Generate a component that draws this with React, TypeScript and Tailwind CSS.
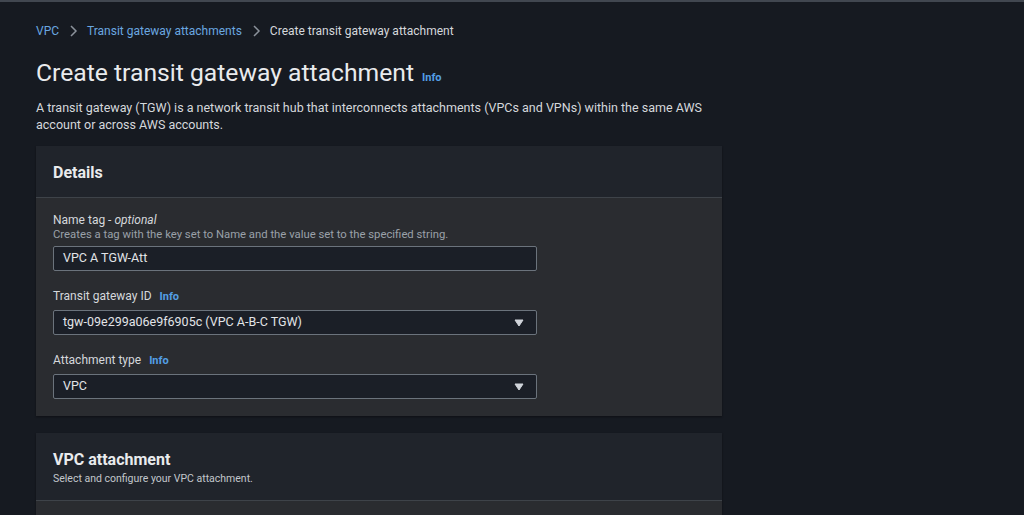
import React from "react";

function Caret() {
  return (
    <svg width="10" height="8" viewBox="0 0 10 8" className="shrink-0">
      <path d="M1 1 H9 L5 7 Z" fill="#d1d5db" stroke="#d1d5db" strokeWidth="1" strokeLinejoin="round" />
    </svg>
  );
}

function Chevron() {
  return (
    <svg width="14" height="14" viewBox="0 0 14 14" className="mx-[7px]">
      <path d="M5 2 L10 7 L5 12" fill="none" stroke="#8b929b" strokeWidth="1.5" />
    </svg>
  );
}

function Info() {
  return <span className="text-[11px] font-bold text-[#539fe5] ml-[8px]">Info</span>;
}

function Select({ value }: { value: string }) {
  return (
    <div className="w-[484px] h-[25px] bg-[#1b1f27] border border-[#6b737c] rounded-[2px] flex items-center justify-between pl-[9px] pr-[12px] text-[12.5px] text-[#e2e4e7]">
      <span>{value}</span>
      <Caret />
    </div>
  );
}

export default function App() {
  return (
    <div className="min-h-[515px] bg-[#161a21] border-t-[2px] border-[#414750] font-['Roboto',sans-serif] text-[#d5d8dc] pl-[36px] pt-[20px]">
      <nav className="flex items-center text-[12px] h-[18px]">
        <span className="text-[#6aa7e0]">VPC</span>
        <Chevron />
        <span className="text-[#6aa7e0]">Transit gateway attachments</span>
        <Chevron />
        <span className="text-[#d5d8dc]">Create transit gateway attachment</span>
      </nav>
      <div className="flex items-baseline mt-[17px]">
        <h1 className="text-[24.7px] leading-[32px] text-[#e9ebed]">Create transit gateway attachment</h1>
        <Info />
      </div>
      <p className="mt-[10px] text-[12.5px] leading-[17px] w-[690px] text-[#d5d8dc]">
        A transit gateway (TGW) is a network transit hub that interconnects attachments (VPCs and VPNs) within the same AWS account or across AWS accounts.
      </p>

      <section className="mt-[13px] w-[686px] bg-[#2a2c30] shadow-[0_1px_2px_rgba(0,0,0,0.4)]">
        <div className="h-[52px] bg-[#20242b] border-b border-[#3e4349] flex items-center px-[17px] pt-[2px]">
          <h2 className="text-[16px] font-bold text-[#e9ebed]">Details</h2>
        </div>
        <div className="px-[17px] pt-[14px] pb-[17px] flex flex-col">
          <div className="text-[12px] leading-[16px]">Name tag - <i>optional</i></div>
          <div className="text-[11.3px] leading-[14px] text-[#9aa1a9]">Creates a tag with the key set to Name and the value set to the specified string.</div>
          <div className="mt-[4px] w-[484px] h-[25px] bg-[#1b1f27] border border-[#6b737c] rounded-[2px] flex items-center pl-[9px] text-[12.5px] text-[#e2e4e7]">VPC A TGW-Att</div>

          <div className="mt-[17px] flex items-baseline text-[12px] leading-[16px]">Transit gateway ID<Info /></div>
          <div className="mt-[5px]"><Select value="tgw-09e299a06e9f6905c (VPC A-B-C TGW)" /></div>

          <div className="mt-[17px] flex items-baseline text-[12px] leading-[16px]">Attachment type<Info /></div>
          <div className="mt-[5px]"><Select value="VPC" /></div>
        </div>
      </section>

      <section className="mt-[17px] w-[686px] bg-[#2a2c30] shadow-[0_1px_2px_rgba(0,0,0,0.4)]">
        <div className="h-[68px] bg-[#20242b] border-b border-[#3e4349] flex flex-col justify-center px-[17px] pt-[3px]">
          <h2 className="text-[16px] font-bold text-[#e9ebed] leading-[20px]">VPC attachment</h2>
          <div className="text-[10.5px] leading-[14px] text-[#c2c7cc] mt-[2px]">Select and configure your VPC attachment.</div>
        </div>
        <div className="h-[40px]"></div>
      </section>
    </div>
  );
}
